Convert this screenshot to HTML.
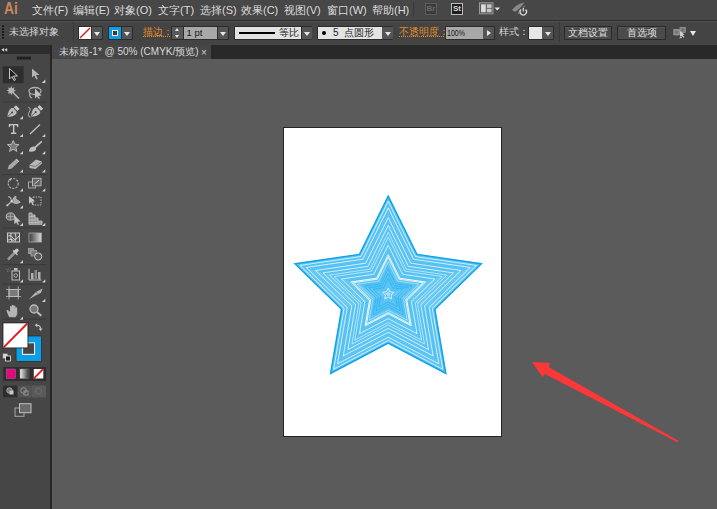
<!DOCTYPE html>
<html><head><meta charset="utf-8">
<style>
*{margin:0;padding:0;box-sizing:border-box}
html,body{width:717px;height:509px;overflow:hidden;background:#5b5b5b;font-family:"Liberation Sans",sans-serif;}
.a{position:absolute}
#menubar{left:0;top:0;width:717px;height:20px;background:#474747;}
#menuline{left:0;top:20px;width:717px;height:1px;background:#2e2e2e}
#ctrl{left:0;top:21px;width:717px;height:24px;background:#444444;border-top:1px solid #505050}
#tabbar{left:52px;top:45px;width:665px;height:14px;background:#292929}
#tab{left:52px;top:45px;width:159px;height:14px;background:#464646}
#lpanel{left:0;top:45px;width:50px;height:464px;background:#464646}
#lphead{left:0;top:45px;width:50px;height:9px;background:#2d2d2d}
#lpborder{left:50px;top:45px;width:2px;height:464px;background:#272727}
#canvas{left:52px;top:59px;width:665px;height:450px;background:#5b5b5b}
.m{color:#dcdcdc;font-size:11px;top:3px;white-space:nowrap;line-height:14px}
.t{color:#d4d4d4;font-size:10px;white-space:nowrap;line-height:12px}
.or{color:#e08a2a;text-decoration:underline dotted}
.btn{border:1px solid #2a2a2a;background:#4b4b4b;color:#e0e0e0;font-size:10px;text-align:center;line-height:12px;box-shadow:inset 0 1px 0 #575757}
.dd{background:#555555;border:1px solid #2f2f2f}
.tri{width:0;height:0;border-left:3px solid transparent;border-right:3px solid transparent;border-top:4px solid #e6e6e6}
.inp{background:#a8a8a8;color:#1a1a1a;font-size:10px;line-height:12px}
.lt{background:#e3e3e3;color:#1a1a1a;font-size:10px;line-height:12px}
</style></head><body>
<div id="canvas" class="a"></div>
<div id="menubar" class="a"></div>
<div id="menuline" class="a"></div>
<div id="ctrl" class="a"></div>
<div id="tabbar" class="a"></div>
<div id="tab" class="a"></div>
<div id="lpanel" class="a"></div>
<div id="lphead" class="a"></div>
<div id="lpborder" class="a"></div>

<!-- menu -->
<div class="a" style="left:4px;top:0px;color:#c9875a;font-size:16px;font-weight:bold;line-height:18px;transform:scaleX(0.86);transform-origin:0 0">Ai</div>
<div class="a m" style="left:32px">文件(F)</div>
<div class="a m" style="left:73px">编辑(E)</div>
<div class="a m" style="left:114px">对象(O)</div>
<div class="a m" style="left:158px">文字(T)</div>
<div class="a m" style="left:200px">选择(S)</div>
<div class="a m" style="left:241px">效果(C)</div>
<div class="a m" style="left:284px">视图(V)</div>
<div class="a m" style="left:327px">窗口(W)</div>
<div class="a m" style="left:372px">帮助(H)</div>
<div class="a" style="left:413px;top:2px;width:1px;height:15px;background:#3a3a3a"></div>
<!-- Br -->
<div class="a" style="left:425px;top:3px;width:12px;height:11.5px;border:1px solid #5c5c5c;background:#3c3c3c;color:#6a6a6a;font-size:8px;line-height:9.5px;text-align:center;font-weight:bold">Br</div>
<!-- St -->
<div class="a" style="left:451px;top:3px;width:12px;height:11.5px;border:1px solid #bdbdbd;background:#1e1e1e;color:#d8d8d8;font-size:8px;line-height:9.5px;text-align:center;font-weight:bold">St</div>
<!-- arrange -->
<svg class="a" style="left:478px;top:1px" width="56" height="18" viewBox="478 1 56 18">
<rect x="479.5" y="2.8" width="13.5" height="11" fill="#555" stroke="#9a9a9a" stroke-width="1"/>
<rect x="481" y="4.3" width="4.8" height="8" fill="#d8d8d8"/>
<rect x="486.8" y="4.3" width="4.8" height="3.6" fill="#c8c8c8"/>
<rect x="486.8" y="8.7" width="4.8" height="3.6" fill="#c8c8c8"/>
<path d="M494.5 7.5 H500 L497.25 10.5 Z" fill="#e6e6e6"/>
<path d="M512 10 Q516 4 524.5 2.5 Q521 8 515 12 Z" fill="#8a8a8a"/>
<path d="M517.5 13.5 Q520 8 525.5 5 Q524 10 519 14.5 Z" fill="#7a7a7a"/>
<circle cx="523.3" cy="11.8" r="4.2" fill="#464646"/>
<path d="M521 9.5 A3.2 3.2 0 1 0 525.6 9.5" stroke="#d8d8d8" stroke-width="1.3" fill="none"/>
<path d="M523.3 8 V11.5" stroke="#d8d8d8" stroke-width="1.3"/>
</svg>
<!-- control bar -->
<div class="a" style="left:2px;top:25px;width:2px;height:15px;background:repeating-linear-gradient(#1e1e1e 0 2px,transparent 2px 3px)"></div>
<div class="a t" style="left:9px;top:26px;color:#d6d6d6">未选择对象</div>
<div class="a" style="left:73px;top:22px;width:1px;height:20px;background:#383838"></div>
<!-- fill swatch -->
<div class="a" style="left:78px;top:26px;width:25px;height:14px;background:#2c2c2c;border-radius:1px"></div>
<div class="a" style="left:79px;top:27px;width:12px;height:12px;background:#fff"></div>
<svg class="a" style="left:79px;top:27px" width="12" height="12"><path d="M1 11 L11 1" stroke="#e8141b" stroke-width="1.5"/></svg>
<div class="a" style="left:91.5px;top:27px;width:10.5px;height:12px;background:#555"></div>
<div class="a tri" style="left:94px;top:31.5px"></div>
<!-- stroke swatch -->
<div class="a" style="left:108px;top:26px;width:25px;height:14px;background:#2c2c2c;border-radius:1px"></div>
<div class="a" style="left:109px;top:27px;width:12px;height:12px;background:#0f9de8"></div>
<div class="a" style="left:112px;top:30px;width:6px;height:6px;background:#3a3a3a;border:1px solid #e8e8e8"></div>
<div class="a" style="left:121.5px;top:27px;width:10.5px;height:12px;background:#555"></div>
<div class="a tri" style="left:124px;top:31.5px"></div>
<!-- stroke label -->
<div class="a t or" style="left:143px;top:26px">描边：</div>
<!-- spinner -->
<div class="a" style="left:171px;top:26px;width:58px;height:14px;background:#2c2c2c;border-radius:1px"></div>
<div class="a" style="left:172px;top:27px;width:11px;height:6px;background:#595959"></div>
<div class="a" style="left:172px;top:33px;width:11px;height:6px;background:#595959"></div>
<div class="a" style="left:175px;top:28px;width:0;height:0;border-left:2.5px solid transparent;border-right:2.5px solid transparent;border-bottom:3px solid #e6e6e6"></div>
<div class="a" style="left:175px;top:35px;width:0;height:0;border-left:2.5px solid transparent;border-right:2.5px solid transparent;border-top:3px solid #e6e6e6"></div>
<div class="a inp" style="left:184px;top:27px;width:33px;height:12px;padding-left:2.5px;font-size:9.5px;line-height:11px">1 pt</div>
<div class="a" style="left:217.5px;top:27px;width:10.5px;height:12px;background:#555"></div>
<div class="a tri" style="left:219.8px;top:31.5px;border-left-width:3px;border-right-width:3px;border-top-width:4px"></div>
<!-- profile -->
<div class="a" style="left:234px;top:26px;width:78px;height:14px;background:#2c2c2c;border-radius:1px"></div>
<div class="a lt" style="left:235px;top:27px;width:66px;height:12px"></div>
<div class="a" style="left:239px;top:32px;width:36px;height:2px;background:#000"></div>
<div class="a t" style="left:279px;top:27px;color:#222">等比</div>
<div class="a" style="left:301.5px;top:27px;width:10px;height:12px;background:#555"></div>
<div class="a tri" style="left:304px;top:31.5px"></div>
<!-- brush -->
<div class="a" style="left:317px;top:26px;width:76px;height:14px;background:#2c2c2c;border-radius:1px"></div>
<div class="a lt" style="left:318px;top:27px;width:64px;height:12px"></div>
<div class="a" style="left:322px;top:31px;width:4px;height:4px;border-radius:2px;background:#000"></div>
<div class="a t" style="left:333px;top:27px;color:#222">5&nbsp;&nbsp;点圆形</div>
<div class="a" style="left:382px;top:27px;width:10.5px;height:12px;background:#555"></div>
<div class="a tri" style="left:384.5px;top:31.5px"></div>
<!-- opacity -->
<div class="a t or" style="left:399px;top:26px">不透明度：</div>
<div class="a" style="left:445px;top:26px;width:50px;height:14px;background:#2c2c2c;border-radius:1px"></div>
<div class="a inp" style="left:446px;top:27px;width:37px;height:12px"></div><div class="a" style="left:447.3px;top:27px;height:12px;font-size:8.8px;line-height:12px;color:#1a1a1a;transform:scaleX(0.8);transform-origin:0 0">100%</div>
<div class="a" style="left:483px;top:27px;width:11px;height:12px;background:#555"></div>
<div class="a" style="left:487px;top:30px;width:0;height:0;border-top:3px solid transparent;border-bottom:3px solid transparent;border-left:4px solid #e6e6e6"></div>
<div class="a t" style="left:499px;top:26px;color:#d6d6d6">样式：</div>
<div class="a" style="left:528px;top:26px;width:26px;height:14px;background:#2c2c2c;border-radius:1px"></div>
<div class="a" style="left:529px;top:27px;width:12.5px;height:12px;background:#e6e6e6"></div>
<div class="a" style="left:542px;top:27px;width:11px;height:12px;background:#555"></div>
<div class="a tri" style="left:545px;top:31.5px"></div>
<div class="a" style="left:559px;top:22px;width:1px;height:20px;background:#383838"></div>
<!-- buttons -->
<div class="a btn" style="left:564px;top:26px;width:48px;height:14px">文档设置</div>
<div class="a btn" style="left:617px;top:26px;width:49px;height:14px">首选项</div>
<svg class="a" style="left:672px;top:25px" width="16" height="15" viewBox="0 0 16 15">
<rect x="1.8" y="4.3" width="5.6" height="5.7" fill="#888" stroke="#a8a8a8" stroke-width="0.6"/>
<rect x="8" y="2.5" width="5.5" height="5.1" fill="#7e7e7e" stroke="#a0a0a0" stroke-width="0.6"/>
<circle cx="4.6" cy="7.1" r="1" fill="#6a6a6a"/><circle cx="10.7" cy="5" r="1" fill="#6a6a6a"/>
<path d="M7.3 13.5 L8.5 11 L10.2 12.8 Z M8 6 L8 12.5 L9.6 11 L11.5 12.8 L12.5 12 L10.7 10.2 L12.5 9.5 Z" fill="#cfcfcf"/>
</svg>
<div class="a tri" style="left:690px;top:31px;border-left-width:3.5px;border-right-width:3.5px;border-top-width:5px"></div>

<!-- tab -->
<div class="a t" style="left:59px;top:46px;color:#d8d8d8;font-size:10px;line-height:12px">未标题-1* @ 50% (CMYK/预览)</div>
<div class="a" style="left:201px;top:46px;color:#cfcfcf;font-size:10px;line-height:13px">×</div>

<!-- left toolbar -->
<svg class="a" style="left:0;top:0" width="52" height="509" viewBox="0 0 52 509">
<!-- header arrows -->
<path d="M1.3 49.8 L4.1 47.9 V51.7 Z M4.4 49.8 L7.2 47.9 V51.7 Z" fill="#cfcfcf"/>
<!-- grip -->
<rect x="16.8" y="56.7" width="14.2" height="2.8" fill="#1c1c1c"/>
<path d="M19.6 56.7 V59.5 M22.4 56.7 V59.5 M25.2 56.7 V59.5 M28.1 56.7 V59.5" stroke="#3c3c3c" stroke-width="0.5"/>
<!-- selected bg -->
<rect x="3" y="66.5" width="20.5" height="16.5" fill="#2e2e2e" stroke="#333" stroke-width="0.5"/>
<g fill="none" stroke="#c8c8c8" stroke-width="1" stroke-linejoin="round">
<!-- selection arrow -->
<path d="M9.5 68.5 V79 L12 76.5 L14 80.5 L15.5 79.8 L13.5 76 L17.5 76 Z" fill="#1e1e1e"/>
</g>
<g fill="#b4b4b4">
<!-- direct selection -->
<path d="M32 68.5 V77.5 L34.3 75.5 L36.3 79.5 L37.8 78.8 L36 75 L39.5 75 Z"/>
<!-- magic wand -->
<path d="M15.90 90.60 L13.70 91.59 L14.55 93.85 L12.29 93.00 L11.30 95.20 L10.31 93.00 L8.05 93.85 L8.90 91.59 L6.70 90.60 L8.90 89.61 L8.05 87.35 L10.31 88.20 L11.30 86.00 L12.29 88.20 L14.55 87.35 L13.70 89.61 Z"/>
<path d="M13.5 93 L19 98.5" stroke="#b4b4b4" stroke-width="1.6"/>
</g>
<!-- lasso -->
<g fill="none" stroke="#b0b0b0" stroke-width="1.3">
<ellipse cx="35" cy="91" rx="6" ry="3.5"/>
<path d="M30 93 Q29 97 32 98"/>
</g>
<path d="M35 88.5 V98.5 L37 96.5 L39 99 L40 98.3 L38.3 96 L41.5 95.5 Z" fill="#c0c0c0"/>
<!-- separators -->
<g fill="#393939">
<rect x="2.5" y="101.5" width="44" height="1"/>
<rect x="2.5" y="174" width="44" height="1"/>
<rect x="2.5" y="227.5" width="44" height="1"/>
<rect x="2.5" y="264.2" width="44" height="1"/>
<rect x="2.5" y="283.7" width="44" height="1"/>
<rect x="2.5" y="318.7" width="44" height="1"/>
</g>
<!-- pen -->
<g transform="translate(7.4,116.8) rotate(-43)">
<path d="M0 0 C2.5 -2.2 5.5 -4.2 9 -3.8 L10.3 -2.3 L10.3 2.3 L9 3.8 C5.5 4.2 2.5 2.2 0 0 Z" fill="#bdbdbd"/>
<rect x="11.2" y="-2.6" width="3" height="5.2" fill="#c8c8c8"/>
<path d="M0.5 0 L6 0" stroke="#505050" stroke-width="0.8"/>
<circle cx="6.5" cy="0" r="1" fill="#404040"/>
</g>
<!-- curvature pen -->
<g transform="translate(31,116.5) rotate(-43)">
<path d="M0 0 C2.5 -2.2 5.5 -4.2 9 -3.8 L10.3 -2.3 L10.3 2.3 L9 3.8 C5.5 4.2 2.5 2.2 0 0 Z" fill="#bdbdbd"/>
<rect x="11.2" y="-2.6" width="3" height="5.2" fill="#c8c8c8"/>
<path d="M0.5 0 L6 0" stroke="#505050" stroke-width="0.8"/>
<circle cx="6.5" cy="0" r="1" fill="#404040"/>
</g>
<path d="M28.3 107.2 Q31 108 30 110.5 Q28 113.5 28.4 115.5 Q28.8 117.3 30.6 117.2" stroke="#b0b0b0" stroke-width="1" fill="none"/>
<!-- Type -->
<path d="M8.8 124 H18.3 V127.3 H17.5 Q17.3 125.3 15.2 125.3 H14.4 V132.6 H16.3 V134 H11 V132.6 H12.9 V125.3 H12 Q9.9 125.3 9.6 127.3 H8.8 Z" fill="#c4c4c4"/>
<!-- line -->
<path d="M30 134 L40 124.5" stroke="#c4c4c4" stroke-width="1.2"/>
<!-- star -->
<path d="M13.2 140.5 L14.9 144.3 L19 144.6 L15.9 147.3 L16.8 151.4 L13.2 149.2 L9.6 151.4 L10.5 147.3 L7.4 144.6 L11.5 144.3 Z" fill="#7a7a7a" stroke="#b8b8b8" stroke-width="1"/>
<!-- brush -->
<path d="M28.8 151.6 Q29.8 146.3 34.3 146.6 L36.2 148.4 Q35.8 152.3 28.8 151.6 Z" fill="#bdbdbd"/>
<path d="M34.8 147.6 L41.8 141.3" stroke="#c4c4c4" stroke-width="1.6"/>
<!-- pencil -->
<path d="M7.7 169.5 L8.8 165.5 L15.5 159.5 L18.3 162.3 L11.8 168.5 Z" fill="#a8a8a8"/>
<path d="M15.5 159.5 L16.5 158.7 L19.2 161.3 L18.3 162.3 Z" fill="#d0d0d0"/>
<!-- eraser -->
<path d="M29.5 165 L36 159.5 L41.9 161.5 L41.9 163.5 L35.5 169 L29.5 168 Z" fill="#b8b8b8"/>
<path d="M29.5 165.3 L35.5 166.5 L41.9 161.5" stroke="#5a5a5a" stroke-width="0.7" fill="none"/>
<!-- rotate -->
<circle cx="13.2" cy="183.5" r="5" fill="none" stroke="#b4b4b4" stroke-width="1.2" stroke-dasharray="2 1.3"/>
<path d="M8.5 179 L11.5 178.3 L10.5 181 Z" fill="#c0c0c0"/>
<!-- scale -->
<rect x="28.5" y="182" width="7" height="6" fill="none" stroke="#a8a8a8" stroke-width="1"/>
<rect x="32.5" y="178.3" width="8.5" height="7.5" fill="#666" stroke="#b8b8b8" stroke-width="1"/>
<path d="M34.5 184 L39 180" stroke="#d0d0d0" stroke-width="1"/>
<!-- width tool -->
<path d="M7.5 205.3 L11.8 201.2" stroke="#b8b8b8" stroke-width="1.2"/>
<circle cx="7.3" cy="205.3" r="1.1" fill="#c4c4c4"/>
<path d="M8.2 197 Q10.5 196 11.8 201.2" stroke="#b8b8b8" stroke-width="1.1" fill="none"/>
<path d="M11.8 201.2 Q14 196 16 196.2 Q15.2 199 17 200 Q19 200.5 20.2 202.3 Q17 204.5 13.5 203 Z" fill="#a8a8a8" stroke="#c0c0c0" stroke-width="0.8"/>
<circle cx="11.8" cy="201.2" r="1.6" fill="#d8d8d8" stroke="#555" stroke-width="0.5"/>
<!-- free transform -->
<rect x="33" y="197" width="8" height="8" fill="none" stroke="#b4b4b4" stroke-width="1" stroke-dasharray="1.6 1"/>
<path d="M29 196 V204 L31 202 L32.5 205 L33.7 204.5 L32.3 201.5 L35 201.3 Z" fill="#c4c4c4"/>
<!-- shape builder -->
<ellipse cx="10.5" cy="216.5" rx="4.3" ry="3.6" fill="#6e6e6e" stroke="#b8b8b8" stroke-width="1"/>
<path d="M6.3 216.5 H14.7 M10.5 213 V220" stroke="#b0b0b0" stroke-width="0.7"/>
<path d="M14.3 215.3 V224.2 L16.3 222.3 L17.8 225 L19 224.4 L17.6 221.7 L20.6 221.4 Z" fill="#c4c4c4"/>
<!-- perspective grid -->
<path d="M29 213 H32 V215 H35 V218 H38 V221 H42 V224.3 H29 Z" fill="#8a8a8a" stroke="#c4c4c4" stroke-width="0.9"/>
<path d="M32 215 V224.3 M35 218 V224.3 M38 221 V224.3 M29 216.5 H35 M29 220 H38 M29 222.5 H42" stroke="#c4c4c4" stroke-width="0.7" fill="none"/>
<!-- mesh -->
<rect x="7.5" y="233" width="12" height="9" fill="#555" stroke="#c8c8c8" stroke-width="1"/>
<path d="M8 236 Q11 234 13 238 T19 236 M8 240 Q12 238 14 241 M11 233 Q10 237 12 242 M15 233 Q17 237 15 242" stroke="#d8d8d8" stroke-width="0.9" fill="none"/>
<!-- gradient -->
<defs><linearGradient id="gr" x1="0" x2="1"><stop offset="0" stop-color="#3a3a3a"/><stop offset="1" stop-color="#d8d8d8"/></linearGradient>
<linearGradient id="gr2" x1="0" x2="1"><stop offset="0" stop-color="#f0f0f0"/><stop offset="1" stop-color="#333"/></linearGradient></defs>
<rect x="29" y="233" width="12.3" height="9" fill="url(#gr)" stroke="#a8a8a8" stroke-width="0.8"/>
<!-- eyedropper -->
<path d="M8 259.5 L15 252.5" stroke="#bdbdbd" stroke-width="2.2"/>
<path d="M8 259.5 L15 252.5" stroke="#555" stroke-width="0.7"/>
<path d="M13.5 251 L16.5 248.5 Q18.5 248.5 18.9 250.5 L16.5 253.5 Z" fill="#c8c8c8"/>
<path d="M13 250.5 L17.5 255" stroke="#c8c8c8" stroke-width="1.2"/>
<!-- blend -->
<rect x="28.5" y="248.6" width="5" height="5" fill="#888" stroke="#b0b0b0" stroke-width="0.7"/>
<rect x="31" y="250.5" width="5.5" height="5.5" fill="#777" stroke="#b0b0b0" stroke-width="0.7"/>
<circle cx="38.2" cy="256.5" r="3.6" fill="#5a5a5a" stroke="#c8c8c8" stroke-width="1"/>
<!-- symbol sprayer -->
<rect x="12" y="271" width="7.5" height="9" fill="#444" stroke="#c0c0c0" stroke-width="1"/>
<rect x="14" y="268" width="3.5" height="2.5" fill="#c0c0c0"/>
<circle cx="15.7" cy="275.5" r="1.8" fill="none" stroke="#c0c0c0" stroke-width="0.9"/>
<path d="M6.5 269.5 L11 268.5 M7 271.5 L10.5 270.5" stroke="#888" stroke-width="0.8" stroke-dasharray="1 0.8"/>
<!-- column graph -->
<path d="M29 268.7 V280 H41.3" stroke="#c0c0c0" stroke-width="1" fill="none"/>
<rect x="31" y="273" width="2.5" height="6.5" fill="#b0b0b0"/>
<rect x="34.5" y="270" width="2.5" height="9.5" fill="#888"/>
<rect x="38" y="272" width="2.5" height="7.5" fill="#b0b0b0"/>
<!-- artboard -->
<rect x="9" y="289.5" width="9.3" height="7" fill="#7a7a7a" stroke="#bcbcbc" stroke-width="1"/>
<path d="M6 289.5 H21 M6 296.5 H21 M9 286.5 V299.5 M18.3 286.5 V299.5" stroke="#bcbcbc" stroke-width="0.8"/>
<!-- slice -->
<path d="M29 299.2 L36 292 L42.6 288.6 L41 292.8 L35.5 295.5 Z" fill="#b8b8b8"/>
<path d="M36 292 L38.5 294.2" stroke="#6a6a6a" stroke-width="0.7"/>
<!-- hand -->
<path d="M9 317 L6.5 311 Q6.5 309.5 8 310 L10 312 V306.5 Q11 305.5 11.8 306.5 V310.5 V305.3 Q12.8 304.3 13.6 305.3 V310.5 V306 Q14.6 305 15.4 306 V311 V307.8 Q16.4 306.8 17.2 307.8 V313.5 Q16.5 317 14.5 317.2 Z" fill="#b4b4b4"/>
<!-- zoom -->
<circle cx="34" cy="309" r="4" fill="#777" stroke="#bcbcbc" stroke-width="1.3"/>
<path d="M37 312 L41.3 315.8" stroke="#bcbcbc" stroke-width="2"/>
<!-- flyout triangles -->
<g fill="#cfcfcf">
<path d="M45.3 79.5 V83 H41.8 Z"/>
<path d="M23 116 V119.3 H19.7 Z"/>
<path d="M23 133.8 V137 H19.8 Z M45.3 133.8 V137 H42 Z"/>
<path d="M23 151 V154.3 H19.8 Z M45.3 151 V154.3 H42 Z"/>
<path d="M23 169.3 V172.6 H19.8 Z M45.3 169.3 V172.6 H42 Z"/>
<path d="M23 188.3 V191.5 H19.8 Z M45.3 188.3 V191.5 H42 Z"/>
<path d="M23 205.3 V208.5 H19.8 Z"/>
<path d="M23 222.8 V226 H19.8 Z M45.3 222.8 V226 H42 Z"/>
<path d="M23 260 V263.2 H19.8 Z"/>
<path d="M23 279.3 V282.5 H19.8 Z M45.3 279.3 V282.5 H42 Z"/>
<path d="M45.3 298.8 V302 H42 Z"/>
<path d="M23 316.5 V319.7 H19.8 Z"/>
</g>
<!-- swap arrows -->
<path d="M37 325.3 Q40.5 325.3 40.6 328.8" stroke="#c8c8c8" stroke-width="1.1" fill="none"/>
<path d="M34.8 325.3 L37.3 323.3 V327.3 Z M40.6 331 L38.6 328.5 H42.6 Z" fill="#c8c8c8"/>
<!-- stroke swatch -->
<rect x="15.6" y="335.5" width="25.9" height="26.1" fill="#2e2e2e"/>
<rect x="16.5" y="336.4" width="24.5" height="24.6" fill="#0a9fe6"/>
<rect x="21.9" y="342.3" width="13.2" height="12.7" fill="#e8e8e8"/>
<rect x="23.1" y="343.3" width="10.9" height="10.5" fill="#464646"/>
<!-- fill swatch -->
<rect x="2.6" y="322.5" width="25.7" height="25.8" fill="#1e1e1e"/>
<rect x="3.4" y="323.3" width="24.1" height="24.2" fill="#ffffff"/>
<path d="M3.6 347.3 L27.3 323.5" stroke="#e8141b" stroke-width="1.8"/>
<!-- default fill/stroke -->
<rect x="2.8" y="353.5" width="5" height="5" fill="#d8d8d8" stroke="#555" stroke-width="0.5"/>
<rect x="5.5" y="356" width="5" height="5" fill="#222" stroke="#d8d8d8" stroke-width="0.9"/>
<!-- color mode row -->
<rect x="3.1" y="367" width="43" height="14" fill="#2f2f2f"/>
<rect x="6.3" y="369" width="9.4" height="9.5" fill="#e4077f" stroke="#888" stroke-width="0.4"/>
<rect x="20" y="369" width="9" height="9.5" fill="url(#gr2)" stroke="#888" stroke-width="0.4"/>
<rect x="33.8" y="369" width="9.5" height="9.5" fill="#ffffff"/>
<path d="M34 378.3 L43 369.2" stroke="#e8141b" stroke-width="1.8"/>
<!-- drawing mode row -->
<rect x="3" y="385.6" width="43" height="11.8" fill="#535353"/>
<rect x="3" y="385.6" width="14.5" height="11.8" fill="#2e2e2e"/>
<rect x="32" y="385.6" width="14" height="11.8" fill="#595959"/>
<circle cx="9.5" cy="390.5" r="2.8" fill="#777" stroke="#bbb" stroke-width="0.7"/>
<rect x="9.5" y="390.5" width="4" height="4" fill="#c8c8c8"/>
<circle cx="23.5" cy="390.5" r="2.8" fill="none" stroke="#999" stroke-width="0.9"/>
<rect x="24" y="391" width="4" height="4" fill="none" stroke="#999" stroke-width="0.9"/>
<circle cx="38.5" cy="391" r="3" fill="none" stroke="#6e6e6e" stroke-width="0.9"/>
<!-- screen mode -->
<rect x="15" y="408" width="9" height="8.3" fill="none" stroke="#a8a8a8" stroke-width="1"/>
<rect x="19.5" y="403.7" width="11.5" height="9" fill="#6a6a6a" stroke="#c0c0c0" stroke-width="1"/>
</svg>
<!-- artboard + star -->
<div class="a" style="left:283px;top:127px;width:219px;height:310px;background:#262626"></div>
<div class="a" style="left:284px;top:128px;width:217px;height:308px;background:#ffffff"></div>
<svg class="a" style="left:0;top:0" width="717" height="509" viewBox="0 0 717 509">
<polygon points="388.20,196.10 417.00,254.46 481.40,263.82 434.80,309.24 445.80,373.38 388.20,343.10 330.60,373.38 341.60,309.24 295.00,263.82 359.40,254.46" fill="#ace0f8" stroke="none"/>
<polygon points="388.20,196.10 417.00,254.46 481.40,263.82 434.80,309.24 445.80,373.38 388.20,343.10 330.60,373.38 341.60,309.24 295.00,263.82 359.40,254.46" fill="none" stroke="#1eaef0" stroke-width="0.5"/>
<polygon points="388.20,197.59 416.56,255.06 479.98,264.28 434.09,309.01 444.93,372.18 388.20,342.35 331.47,372.18 342.31,309.01 296.42,264.28 359.84,255.06" fill="none" stroke="#1eaef0" stroke-width="0.5"/>
<polygon points="388.20,199.09 416.12,255.67 478.56,264.74 433.38,308.78 444.05,370.97 388.20,341.61 332.35,370.97 343.02,308.78 297.84,264.74 360.28,255.67" fill="none" stroke="#1eaef0" stroke-width="0.5"/>
<polygon points="388.20,200.58 415.68,256.27 477.14,265.20 432.67,308.55 443.17,369.76 388.20,340.86 333.23,369.76 343.73,308.55 299.26,265.20 360.72,256.27" fill="none" stroke="#1eaef0" stroke-width="0.5"/>
<polygon points="388.20,202.07 415.25,256.87 475.72,265.66 431.96,308.32 442.29,368.55 388.20,340.11 334.11,368.55 344.44,308.32 300.68,265.66 361.15,256.87" fill="none" stroke="#1eaef0" stroke-width="0.5"/>
<polygon points="388.20,203.57 414.81,257.48 474.30,266.12 431.25,308.09 441.41,367.34 388.20,339.37 334.99,367.34 345.15,308.09 302.10,266.12 361.59,257.48" fill="none" stroke="#1eaef0" stroke-width="0.5"/>
<polygon points="388.20,205.06 414.37,258.08 472.88,266.59 430.54,307.86 440.54,366.13 388.20,338.62 335.86,366.13 345.86,307.86 303.52,266.59 362.03,258.08" fill="none" stroke="#1eaef0" stroke-width="0.5"/>
<polygon points="388.20,206.55 413.93,258.69 471.46,267.05 429.83,307.63 439.66,364.93 388.20,337.87 336.74,364.93 346.57,307.63 304.94,267.05 362.47,258.69" fill="none" stroke="#1eaef0" stroke-width="0.5"/>
<polygon points="388.20,208.05 413.49,259.29 470.04,267.51 429.12,307.40 438.78,363.72 388.20,337.13 337.62,363.72 347.28,307.40 306.36,267.51 362.91,259.29" fill="none" stroke="#1eaef0" stroke-width="0.5"/>
<polygon points="388.20,209.54 413.05,259.89 468.62,267.97 428.41,307.17 437.90,362.51 388.20,336.38 338.50,362.51 347.99,307.17 307.78,267.97 363.35,259.89" fill="none" stroke="#1eaef0" stroke-width="0.5"/>
<polygon points="388.20,211.03 412.61,260.50 467.20,268.43 427.70,306.93 437.03,361.30 388.20,335.63 339.37,361.30 348.70,306.93 309.20,268.43 363.79,260.50" fill="none" stroke="#1eaef0" stroke-width="0.5"/>
<polygon points="388.20,212.53 412.17,261.10 465.78,268.89 426.99,306.70 436.15,360.09 388.20,334.89 340.25,360.09 349.41,306.70 310.62,268.89 364.23,261.10" fill="none" stroke="#1eaef0" stroke-width="0.5"/>
<polygon points="388.20,214.02 411.73,261.71 464.36,269.35 426.28,306.47 435.27,358.89 388.20,334.14 341.13,358.89 350.12,306.47 312.04,269.35 364.67,261.71" fill="none" stroke="#1eaef0" stroke-width="0.5"/>
<polygon points="388.20,215.51 411.30,262.31 462.94,269.82 425.57,306.24 434.39,357.68 388.20,333.39 342.01,357.68 350.83,306.24 313.46,269.82 365.10,262.31" fill="none" stroke="#1eaef0" stroke-width="0.5"/>
<polygon points="388.20,217.01 410.86,262.92 461.52,270.28 424.86,306.01 433.51,356.47 388.20,332.65 342.89,356.47 351.54,306.01 314.88,270.28 365.54,262.92" fill="none" stroke="#1eaef0" stroke-width="0.5"/>
<polygon points="388.20,218.50 410.42,263.52 460.10,270.74 424.15,305.78 432.64,355.26 388.20,331.90 343.76,355.26 352.25,305.78 316.30,270.74 365.98,263.52" fill="none" stroke="#1eaef0" stroke-width="0.5"/>
<polygon points="388.20,219.99 409.98,264.12 458.68,271.20 423.44,305.55 431.76,354.05 388.20,331.15 344.64,354.05 352.96,305.55 317.72,271.20 366.42,264.12" fill="none" stroke="#1eaef0" stroke-width="0.5"/>
<polygon points="388.20,221.49 409.54,264.73 457.26,271.66 422.73,305.32 430.88,352.85 388.20,330.41 345.52,352.85 353.67,305.32 319.14,271.66 366.86,264.73" fill="none" stroke="#1eaef0" stroke-width="0.5"/>
<polygon points="388.20,222.98 409.10,265.33 455.84,272.12 422.02,305.09 430.00,351.64 388.20,329.66 346.40,351.64 354.38,305.09 320.56,272.12 367.30,265.33" fill="none" stroke="#1eaef0" stroke-width="0.5"/>
<polygon points="388.20,224.47 408.66,265.94 454.42,272.58 421.31,304.86 429.13,350.43 388.20,328.91 347.27,350.43 355.09,304.86 321.98,272.58 367.74,265.94" fill="none" stroke="#1eaef0" stroke-width="0.5"/>
<polygon points="388.20,225.97 408.22,266.54 453.00,273.05 420.60,304.63 428.25,349.22 388.20,328.17 348.15,349.22 355.80,304.63 323.40,273.05 368.18,266.54" fill="none" stroke="#1eaef0" stroke-width="0.5"/>
<polygon points="388.20,227.46 407.79,267.14 451.58,273.51 419.89,304.40 427.37,348.01 388.20,327.42 349.03,348.01 356.51,304.40 324.82,273.51 368.61,267.14" fill="none" stroke="#1eaef0" stroke-width="0.5"/>
<polygon points="388.20,228.95 407.35,267.75 450.16,273.97 419.18,304.17 426.49,346.80 388.20,326.67 349.91,346.80 357.22,304.17 326.24,273.97 369.05,267.75" fill="none" stroke="#1eaef0" stroke-width="0.5"/>
<polygon points="388.20,230.45 406.91,268.35 448.74,274.43 418.47,303.93 425.61,345.60 388.20,325.93 350.79,345.60 357.93,303.93 327.66,274.43 369.49,268.35" fill="none" stroke="#1eaef0" stroke-width="0.5"/>
<polygon points="388.20,231.94 406.47,268.96 447.32,274.89 417.76,303.70 424.74,344.39 388.20,325.18 351.66,344.39 358.64,303.70 329.08,274.89 369.93,268.96" fill="none" stroke="#1eaef0" stroke-width="0.5"/>
<polygon points="388.20,233.43 406.03,269.56 445.90,275.35 417.05,303.47 423.86,343.18 388.20,324.43 352.54,343.18 359.35,303.47 330.50,275.35 370.37,269.56" fill="none" stroke="#1eaef0" stroke-width="0.5"/>
<polygon points="388.20,234.93 405.59,270.16 444.48,275.81 416.34,303.24 422.98,341.97 388.20,323.69 353.42,341.97 360.06,303.24 331.92,275.81 370.81,270.16" fill="none" stroke="#1eaef0" stroke-width="0.5"/>
<polygon points="388.20,236.42 405.15,270.77 443.06,276.28 415.63,303.01 422.10,340.76 388.20,322.94 354.30,340.76 360.77,303.01 333.34,276.28 371.25,270.77" fill="none" stroke="#1eaef0" stroke-width="0.5"/>
<polygon points="388.20,237.91 404.71,271.37 441.64,276.74 414.92,302.78 421.23,339.56 388.20,322.19 355.17,339.56 361.48,302.78 334.76,276.74 371.69,271.37" fill="none" stroke="#1eaef0" stroke-width="0.5"/>
<polygon points="388.20,239.41 404.27,271.98 440.22,277.20 414.21,302.55 420.35,338.35 388.20,321.45 356.05,338.35 362.19,302.55 336.18,277.20 372.13,271.98" fill="none" stroke="#1eaef0" stroke-width="0.5"/>
<polygon points="388.20,240.90 403.84,272.58 438.80,277.66 413.50,302.32 419.47,337.14 388.20,320.70 356.93,337.14 362.90,302.32 337.60,277.66 372.56,272.58" fill="none" stroke="#1eaef0" stroke-width="0.5"/>
<polygon points="388.20,242.39 403.40,273.18 437.38,278.12 412.79,302.09 418.59,335.93 388.20,319.95 357.81,335.93 363.61,302.09 339.02,278.12 373.00,273.18" fill="none" stroke="#1eaef0" stroke-width="0.5"/>
<polygon points="388.20,243.89 402.96,273.79 435.96,278.58 412.08,301.86 417.71,334.72 388.20,319.21 358.69,334.72 364.32,301.86 340.44,278.58 373.44,273.79" fill="none" stroke="#1eaef0" stroke-width="0.5"/>
<polygon points="388.20,245.38 402.52,274.39 434.54,279.04 411.37,301.63 416.84,333.52 388.20,318.46 359.56,333.52 365.03,301.63 341.86,279.04 373.88,274.39" fill="none" stroke="#1eaef0" stroke-width="0.5"/>
<polygon points="388.20,246.87 402.08,275.00 433.12,279.51 410.66,301.40 415.96,332.31 388.20,317.71 360.44,332.31 365.74,301.40 343.28,279.51 374.32,275.00" fill="none" stroke="#1eaef0" stroke-width="0.5"/>
<polygon points="388.20,248.37 401.64,275.60 431.69,279.97 409.95,301.17 415.08,331.10 388.20,316.97 361.32,331.10 366.45,301.17 344.71,279.97 374.76,275.60" fill="none" stroke="#1eaef0" stroke-width="0.5"/>
<polygon points="388.20,249.86 401.20,276.20 430.27,280.43 409.24,300.94 414.20,329.89 388.20,316.22 362.20,329.89 367.16,300.94 346.13,280.43 375.20,276.20" fill="none" stroke="#1eaef0" stroke-width="0.5"/>
<polygon points="388.20,251.35 400.76,276.81 428.85,280.89 408.53,300.70 413.33,328.68 388.20,315.47 363.07,328.68 367.87,300.70 347.55,280.89 375.64,276.81" fill="none" stroke="#1eaef0" stroke-width="0.5"/>
<polygon points="388.20,252.85 400.32,277.41 427.43,281.35 407.82,300.47 412.45,327.47 388.20,314.73 363.95,327.47 368.58,300.47 348.97,281.35 376.08,277.41" fill="none" stroke="#1eaef0" stroke-width="0.5"/>
<polygon points="388.20,254.34 399.89,278.02 426.01,281.81 407.11,300.24 411.57,326.27 388.20,313.98 364.83,326.27 369.29,300.24 350.39,281.81 376.51,278.02" fill="none" stroke="#1eaef0" stroke-width="0.5"/>
<polygon points="388.20,255.83 399.45,278.62 424.59,282.27 406.40,300.01 410.69,325.06 388.20,313.23 365.71,325.06 370.00,300.01 351.81,282.27 376.95,278.62" fill="none" stroke="#1eaef0" stroke-width="0.5"/>
<polygon points="388.20,257.33 399.01,279.22 423.17,282.74 405.69,299.78 409.81,323.85 388.20,312.49 366.59,323.85 370.71,299.78 353.23,282.74 377.39,279.22" fill="none" stroke="#1eaef0" stroke-width="0.5"/>
<polygon points="388.20,258.82 398.57,279.83 421.75,283.20 404.98,299.55 408.94,322.64 388.20,311.74 367.46,322.64 371.42,299.55 354.65,283.20 377.83,279.83" fill="none" stroke="#1eaef0" stroke-width="0.5"/>
<polygon points="388.20,260.31 398.13,280.43 420.33,283.66 404.27,299.32 408.06,321.43 388.20,310.99 368.34,321.43 372.13,299.32 356.07,283.66 378.27,280.43" fill="none" stroke="#1eaef0" stroke-width="0.5"/>
<polygon points="388.20,261.81 397.69,281.04 418.91,284.12 403.56,299.09 407.18,320.23 388.20,310.25 369.22,320.23 372.84,299.09 357.49,284.12 378.71,281.04" fill="none" stroke="#1eaef0" stroke-width="0.5"/>
<polygon points="388.20,263.30 397.25,281.64 417.49,284.58 402.85,298.86 406.30,319.02 388.20,309.50 370.10,319.02 373.55,298.86 358.91,284.58 379.15,281.64" fill="none" stroke="#1eaef0" stroke-width="0.5"/>
<polygon points="388.20,264.79 396.81,282.25 416.07,285.04 402.14,298.63 405.43,317.81 388.20,308.75 370.97,317.81 374.26,298.63 360.33,285.04 379.59,282.25" fill="none" stroke="#1eaef0" stroke-width="0.5"/>
<polygon points="388.20,266.29 396.37,282.85 414.65,285.51 401.43,298.40 404.55,316.60 388.20,308.01 371.85,316.60 374.97,298.40 361.75,285.51 380.03,282.85" fill="none" stroke="#1eaef0" stroke-width="0.5"/>
<polygon points="388.20,267.78 395.94,283.45 413.23,285.97 400.72,298.17 403.67,315.39 388.20,307.26 372.73,315.39 375.68,298.17 363.17,285.97 380.46,283.45" fill="none" stroke="#1eaef0" stroke-width="0.5"/>
<polygon points="388.20,269.27 395.50,284.06 411.81,286.43 400.01,297.94 402.79,314.19 388.20,306.51 373.61,314.19 376.39,297.94 364.59,286.43 380.90,284.06" fill="none" stroke="#1eaef0" stroke-width="0.5"/>
<polygon points="388.20,270.77 395.06,284.66 410.39,286.89 399.30,297.71 401.91,312.98 388.20,305.77 374.49,312.98 377.10,297.71 366.01,286.89 381.34,284.66" fill="none" stroke="#1eaef0" stroke-width="0.5"/>
<polygon points="388.20,272.26 394.62,285.27 408.97,287.35 398.59,297.47 401.04,311.77 388.20,305.02 375.36,311.77 377.81,297.47 367.43,287.35 381.78,285.27" fill="none" stroke="#1eaef0" stroke-width="0.5"/>
<polygon points="388.20,273.75 394.18,285.87 407.55,287.81 397.88,297.24 400.16,310.56 388.20,304.27 376.24,310.56 378.52,297.24 368.85,287.81 382.22,285.87" fill="none" stroke="#1eaef0" stroke-width="0.5"/>
<polygon points="388.20,275.25 393.74,286.47 406.13,288.27 397.17,297.01 399.28,309.35 388.20,303.53 377.12,309.35 379.23,297.01 370.27,288.27 382.66,286.47" fill="none" stroke="#1eaef0" stroke-width="0.5"/>
<polygon points="388.20,276.74 393.30,287.08 404.71,288.74 396.46,296.78 398.40,308.14 388.20,302.78 378.00,308.14 379.94,296.78 371.69,288.74 383.10,287.08" fill="none" stroke="#1eaef0" stroke-width="0.5"/>
<polygon points="388.20,278.23 392.86,287.68 403.29,289.20 395.75,296.55 397.53,306.94 388.20,302.03 378.87,306.94 380.65,296.55 373.11,289.20 383.54,287.68" fill="none" stroke="#1eaef0" stroke-width="0.5"/>
<polygon points="388.20,279.73 392.42,288.29 401.87,289.66 395.03,296.32 396.65,305.73 388.20,301.29 379.75,305.73 381.37,296.32 374.53,289.66 383.98,288.29" fill="none" stroke="#1eaef0" stroke-width="0.5"/>
<polygon points="388.20,281.22 391.99,288.89 400.45,290.12 394.32,296.09 395.77,304.52 388.20,300.54 380.63,304.52 382.08,296.09 375.95,290.12 384.41,288.89" fill="none" stroke="#1eaef0" stroke-width="0.5"/>
<polygon points="388.20,282.71 391.55,289.49 399.03,290.58 393.61,295.86 394.89,303.31 388.20,299.79 381.51,303.31 382.79,295.86 377.37,290.58 384.85,289.49" fill="none" stroke="#1eaef0" stroke-width="0.5"/>
<polygon points="388.20,284.21 391.11,290.10 397.61,291.04 392.90,295.63 394.02,302.10 388.20,299.05 382.38,302.10 383.50,295.63 378.79,291.04 385.29,290.10" fill="none" stroke="#1eaef0" stroke-width="0.5"/>
<polygon points="388.20,285.70 390.67,290.70 396.19,291.50 392.19,295.40 393.14,300.90 388.20,298.30 383.26,300.90 384.21,295.40 380.21,291.50 385.73,290.70" fill="none" stroke="#1eaef0" stroke-width="0.5"/>
<polygon points="388.20,287.19 390.23,291.31 394.77,291.97 391.48,295.17 392.26,299.69 388.20,297.55 384.14,299.69 384.92,295.17 381.63,291.97 386.17,291.31" fill="none" stroke="#1eaef0" stroke-width="0.5"/>
<polygon points="388.20,288.69 389.79,291.91 393.35,292.43 390.77,294.94 391.38,298.48 388.20,296.81 385.02,298.48 385.63,294.94 383.05,292.43 386.61,291.91" fill="none" stroke="#1eaef0" stroke-width="0.5"/>
<polygon points="388.20,290.18 389.35,292.51 391.93,292.89 390.06,294.71 390.50,297.27 388.20,296.06 385.90,297.27 386.34,294.71 384.47,292.89 387.05,292.51" fill="none" stroke="#1eaef0" stroke-width="0.5"/>
<polygon points="388.20,201.29 415.47,256.56 476.46,265.42 432.33,308.44 442.75,369.18 388.20,340.50 333.65,369.18 344.07,308.44 299.94,265.42 360.93,256.56" fill="none" stroke="#ffffff" stroke-width="0.8" stroke-opacity="0.9"/>
<polygon points="388.20,207.86 413.55,259.22 470.22,267.45 429.21,307.42 438.89,363.87 388.20,337.22 337.51,363.87 347.19,307.42 306.18,267.45 362.85,259.22" fill="none" stroke="#ffffff" stroke-width="0.8" stroke-opacity="0.9"/>
<polygon points="388.20,217.66 410.67,263.18 460.90,270.48 424.55,305.91 433.13,355.94 388.20,332.32 343.27,355.94 351.85,305.91 315.50,270.48 365.73,263.18" fill="none" stroke="#ffffff" stroke-width="0.8" stroke-opacity="0.9"/>
<polygon points="388.20,225.50 408.36,266.35 453.44,272.90 420.82,304.70 428.52,349.60 388.20,328.40 347.88,349.60 355.58,304.70 322.96,272.90 368.04,266.35" fill="none" stroke="#ffffff" stroke-width="0.8" stroke-opacity="0.9"/>
<polygon points="388.20,232.36 406.34,269.13 446.92,275.02 417.56,303.64 424.49,344.05 388.20,324.97 351.91,344.05 358.84,303.64 329.48,275.02 370.06,269.13" fill="none" stroke="#ffffff" stroke-width="0.7" stroke-opacity="0.8"/>
<polygon points="388.20,237.26 404.90,271.11 442.26,276.54 415.23,302.88 421.61,340.08 388.20,322.52 354.79,340.08 361.17,302.88 334.14,276.54 371.50,271.11" fill="none" stroke="#ffffff" stroke-width="0.7" stroke-opacity="0.8"/>
<polygon points="388.20,245.10 402.60,274.28 434.80,278.96 411.50,301.67 417.00,333.74 388.20,318.60 359.40,333.74 364.90,301.67 341.60,278.96 373.80,274.28" fill="none" stroke="#ffffff" stroke-width="0.8" stroke-opacity="0.9"/>
<polygon points="388.20,254.90 399.72,278.24 425.48,281.99 406.84,300.16 411.24,325.81 388.20,313.70 365.16,325.81 369.56,300.16 350.92,281.99 376.68,278.24" fill="none" stroke="#ffffff" stroke-width="1.0" stroke-opacity="1"/>
<polygon points="388.20,257.35 399.00,279.23 423.15,282.74 405.68,299.78 409.80,323.83 388.20,312.48 366.60,323.83 370.72,299.78 353.25,282.74 377.40,279.23" fill="none" stroke="#ffffff" stroke-width="0.8" stroke-opacity="1"/>
<polygon points="388.20,261.76 397.70,281.02 418.96,284.11 403.58,299.10 407.21,320.26 388.20,310.27 369.19,320.26 372.82,299.10 357.44,284.11 378.70,281.02" fill="none" stroke="#ffffff" stroke-width="0.6" stroke-opacity="0.7"/>
<polygon points="388.20,288.22 389.93,291.72 393.79,292.28 391.00,295.01 391.66,298.86 388.20,297.04 384.74,298.86 385.40,295.01 382.61,292.28 386.47,291.72" fill="none" stroke="#ffffff" stroke-width="0.8" stroke-opacity="0.9"/>
<polygon points="388.20,278.42 392.81,287.76 403.11,289.25 395.66,296.52 397.42,306.79 388.20,301.94 378.98,306.79 380.74,296.52 373.29,289.25 383.59,287.76" fill="none" stroke="#1eaef0" stroke-width="0.6"/>
<polygon points="388.20,273.52 394.25,285.78 407.77,287.74 397.99,297.28 400.30,310.75 388.20,304.39 376.10,310.75 378.41,297.28 368.63,287.74 382.15,285.78" fill="none" stroke="#1eaef0" stroke-width="0.6"/>
<polygon points="388.20,268.62 395.69,283.79 412.43,286.23 400.32,298.04 403.18,314.71 388.20,306.84 373.22,314.71 376.08,298.04 363.97,286.23 380.71,283.79" fill="none" stroke="#1eaef0" stroke-width="0.6"/>
<polygon points="388.20,196.10 417.00,254.46 481.40,263.82 434.80,309.24 445.80,373.38 388.20,343.10 330.60,373.38 341.60,309.24 295.00,263.82 359.40,254.46" fill="none" stroke="#0ea3ea" stroke-width="1.4"/></svg>
<!-- red arrow -->
<svg class="a" style="left:0;top:0" width="717" height="509" viewBox="0 0 717 509">
<polygon points="532,362 550.5,363 548.5,367 678.5,440.8 677.5,442.2 545,374 542.5,377" fill="#fe3838"/>
</svg>
</body></html>
